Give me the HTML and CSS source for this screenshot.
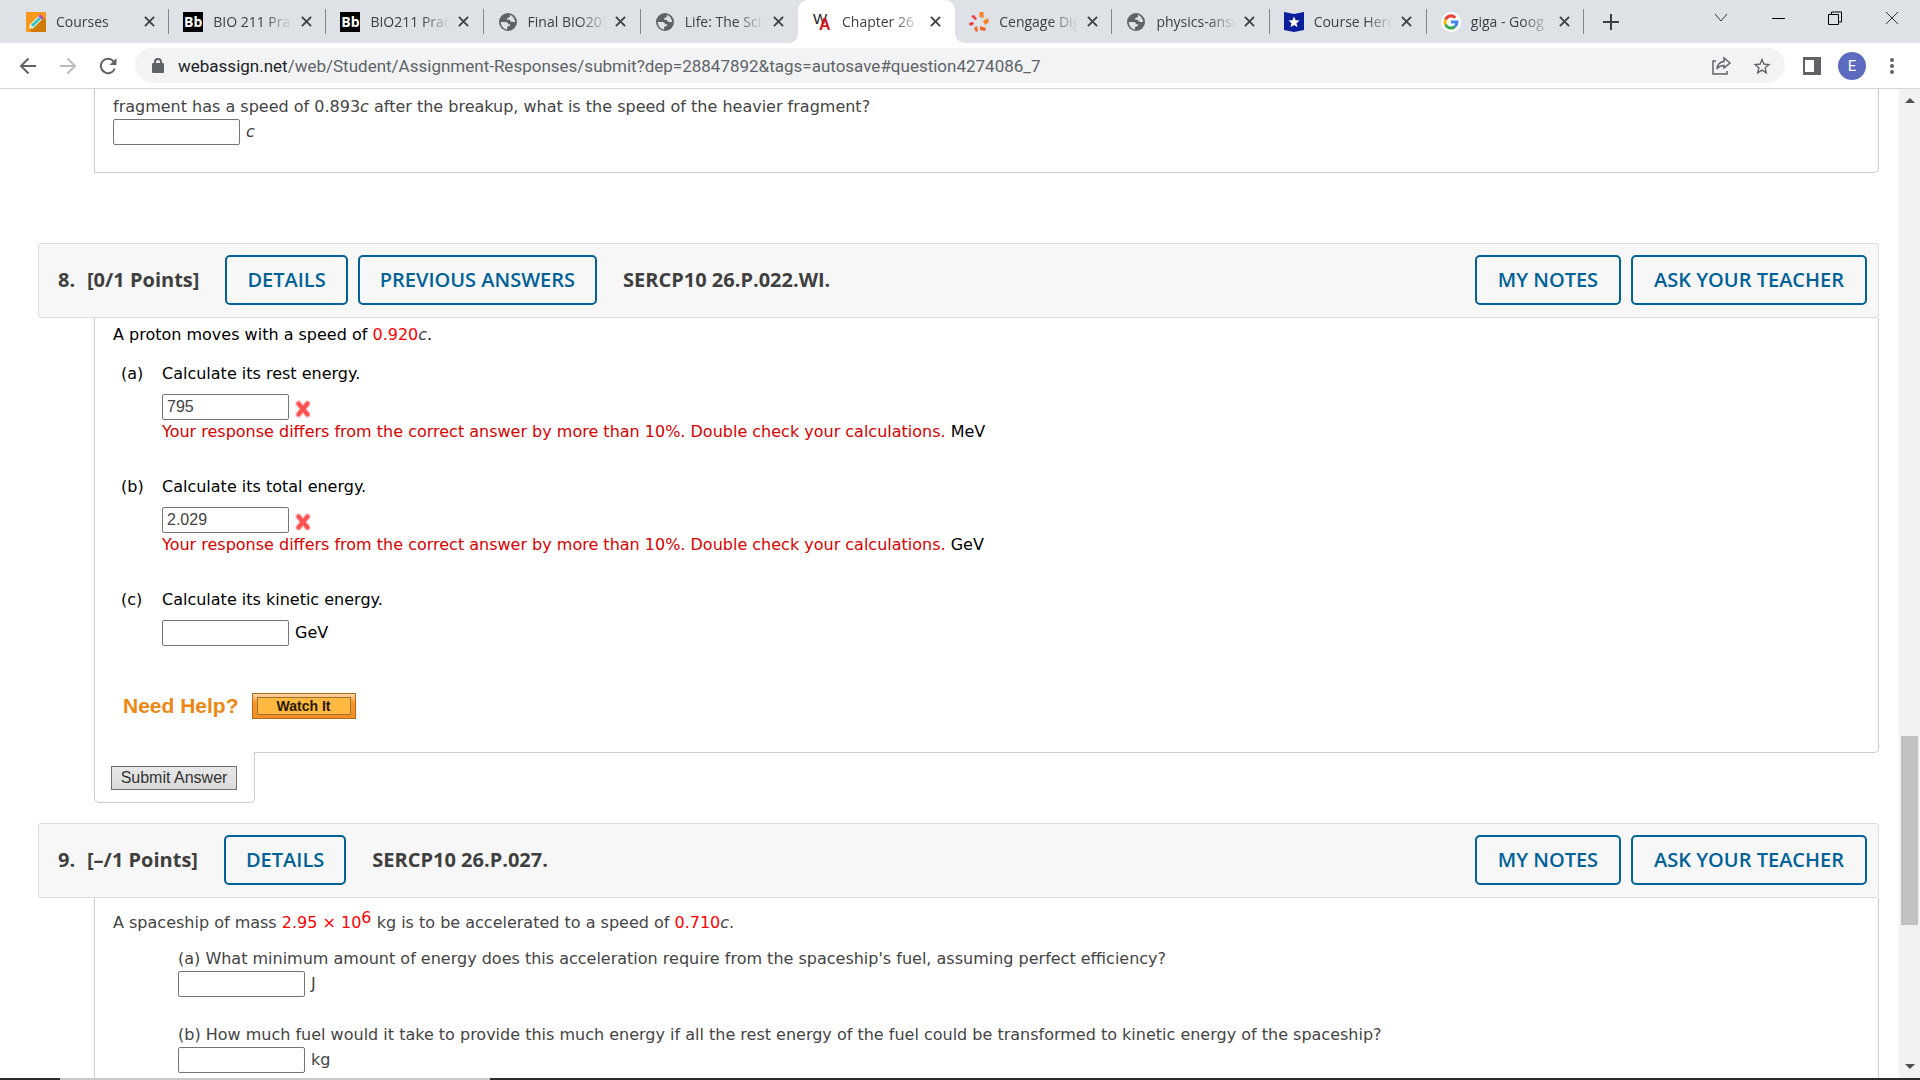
FILE: index.html
```
<!DOCTYPE html>
<html lang="en">
<head>
<meta charset="utf-8">
<title>Chapter 26</title>
<link rel="stylesheet" href="styles.css">
</head>
<body>
<svg class="defs" aria-hidden="true">
  <symbol id="globe" viewBox="2 2 20 20"><circle cx="12" cy="12" r="10" fill="#5f6368"/><path fill="#dee1e6" d="M4 12h5c2 0 3 1 3 2.500h2.500c0 2-1 2.500-3.500 2.700v3C7 20 4 16 4 12zM14 4c3 1 5.500 4 6 8h-3c-1.500 0-2.500-1-3-2.500h-3c0-2 .500-2.500 2-2.500 1 0 1.500-1 1-3z"/></symbol>
  <symbol id="cross" viewBox="0 0 12 12"><path d="M1 1l10 10M11 1L1 11" fill="none" stroke="#3c4043" stroke-width="2"/></symbol>
  <symbol id="wrong" viewBox="0 0 18 18"><path d="M4.500 3.500L13.500 14.500M13.500 3.500L4.500 14.500" fill="none" stroke="#fbb" stroke-width="6" stroke-linecap="round"/><path d="M4.500 3.500L13.500 14.500M13.500 3.500L4.500 14.500" fill="none" stroke="#fa5252" stroke-width="4" stroke-linecap="round"/></symbol>
</svg>
<div class="window">
  <header class="tabstrip">
    <div class="tabs" role="tablist">
      <div class="tab" role="tab">
        <svg class="favicon" viewBox="0 0 20 20"><path fill="#f9991c" d="M0 0h20v20H0z"/><path fill="#d07a06" d="M16 4l4 4v12H5l-1-4z"/><path stroke="#e8f7e8" stroke-width="5" d="M5 15L15 5"/><path stroke="#35c3c1" stroke-width="3" d="M6 14l8-8"/><path stroke="#b04cc0" stroke-width="5" d="M14 6l2-2"/><path fill="#fff3d0" d="M3 17l1-4 3 3z"/></svg>
        <span class="tab-title">Courses</span>
        <button class="tab-close" aria-label="Close tab"><svg><use href="#cross"/></svg></button><i class="tab-line"></i>
      </div>
      <div class="tab" role="tab">
        <span class="favicon bb">Bb</span>
        <span class="tab-title">BIO 211 Prac</span>
        <button class="tab-close" aria-label="Close tab"><svg><use href="#cross"/></svg></button><i class="tab-line"></i>
      </div>
      <div class="tab" role="tab">
        <span class="favicon bb">Bb</span>
        <span class="tab-title">BIO211 Pract</span>
        <button class="tab-close" aria-label="Close tab"><svg><use href="#cross"/></svg></button><i class="tab-line"></i>
      </div>
      <div class="tab" role="tab">
        <svg class="favicon globe"><use href="#globe"/></svg>
        <span class="tab-title">Final BIO201</span>
        <button class="tab-close" aria-label="Close tab"><svg><use href="#cross"/></svg></button><i class="tab-line"></i>
      </div>
      <div class="tab before-active" role="tab">
        <svg class="favicon globe"><use href="#globe"/></svg>
        <span class="tab-title">Life: The Scie</span>
        <button class="tab-close" aria-label="Close tab"><svg><use href="#cross"/></svg></button><i class="tab-line"></i>
      </div>
      <div class="tab active" role="tab" aria-selected="true">
        <svg class="favicon" viewBox="0 0 20 20"><text x="1" y="12" class="wa-w">W</text><text x="7" y="18" class="wa-a">A</text></svg>
        <span class="tab-title">Chapter 26</span>
        <button class="tab-close" aria-label="Close tab"><svg><use href="#cross"/></svg></button><i class="tab-line"></i>
      </div>
      <div class="tab" role="tab">
        <svg class="favicon" viewBox="0 0 20 20"><g fill="#f4652a"><path d="M10.500 0h4v6l-4-1z" fill="#fb8326"/><path d="M14 9l5-3 1 4-4 3z" fill="#fb8326"/><path d="M11 14l6 2-1 3-5-1z"/><path d="M5 16l3-2 1 5-2 1z"/><path d="M0 11l4-1 1 2-4 2z" fill="#e8343a"/><path d="M2 4l3-1 3 4-2 1z" fill="#ee3c3a"/></g></svg>
        <span class="tab-title">Cengage Dig</span>
        <button class="tab-close" aria-label="Close tab"><svg><use href="#cross"/></svg></button><i class="tab-line"></i>
      </div>
      <div class="tab" role="tab">
        <svg class="favicon globe"><use href="#globe"/></svg>
        <span class="tab-title">physics-answ</span>
        <button class="tab-close" aria-label="Close tab"><svg><use href="#cross"/></svg></button><i class="tab-line"></i>
      </div>
      <div class="tab" role="tab">
        <svg class="favicon" viewBox="0 0 20 20"><path fill="#0a1f9c" d="M0 0l10 2 10-2v18l-10 2-10-2z"/><path fill="#fff" d="M10 4.500l1.600 3.800 4 .300-3.100 2.600 1 4-3.500-2.200-3.500 2.200 1-4-3.100-2.600 4-.300z"/></svg>
        <span class="tab-title">Course Hero</span>
        <button class="tab-close" aria-label="Close tab"><svg><use href="#cross"/></svg></button><i class="tab-line"></i>
      </div>
      <div class="tab" role="tab">
        <svg class="favicon" viewBox="0 0 20 20"><circle cx="10" cy="10" r="10" fill="#fff"/><g fill="none" stroke-width="3"><path stroke="#ea4335" d="M4.500 7.500A6 6 0 0 1 14.300 5.700"/><path stroke="#fbbc05" d="M4.500 7.500A6 6 0 0 0 4.500 12.500"/><path stroke="#34a853" d="M4.500 12.500A6 6 0 0 0 13.900 14.600"/><path stroke="#4285f4" d="M10 10h6A6 6 0 0 1 13.900 14.600"/></g></svg>
        <span class="tab-title">giga - Goog</span>
        <button class="tab-close" aria-label="Close tab"><svg><use href="#cross"/></svg></button><i class="tab-line"></i>
      </div>
    </div>
    <button class="new-tab" aria-label="New tab"><svg viewBox="0 0 16 16" width="16" height="16"><path d="M8 0v16M0 8h16" stroke="#3c4043" stroke-width="2"/></svg></button>
    <div class="window-controls">
      <button aria-label="Search tabs"><svg viewBox="0 0 14 14" width="14" height="14"><path d="M1 3l6 7 6-7" fill="none" stroke="#333"/></svg></button>
      <button aria-label="Minimize"><svg viewBox="0 0 14 14" width="14" height="14"><path d="M1 7.500h13" stroke="#000"/></svg></button>
      <button aria-label="Restore"><svg viewBox="0 0 14 14" width="14" height="14"><path d="M.5 3.500h10v10H.5zM3.500 3V1h10v10h-2.500" fill="none" stroke="#000"/></svg></button>
      <button aria-label="Close"><svg viewBox="0 0 14 14" width="14" height="14"><path d="M1 1l12 12M13 1L1 13" stroke="#333"/></svg></button>
    </div>
  </header>

  <nav class="toolbar">
    <button class="tool" aria-label="Back"><svg viewBox="0 0 18 18" width="18" height="18"><path d="M17 9H2M9.500 1.500L2 9l7.500 7.500" fill="none" stroke="#5f6368" stroke-width="2"/></svg></button>
    <button class="tool" aria-label="Forward"><svg viewBox="0 0 18 18" width="18" height="18"><path d="M1 9h15M8.500 1.500L16 9l-7.500 7.500" fill="none" stroke="#babcbe" stroke-width="2"/></svg></button>
    <button class="tool" aria-label="Reload"><svg viewBox="0 0 18 18" width="18" height="18"><path d="M15.800 11.500A7.200 7.200 0 1 1 14.500 4.300" fill="none" stroke="#5f6368" stroke-width="2"/><path d="M17.500 1v7h-7z" fill="#5f6368"/></svg></button>
    <div class="omnibox">
      <svg class="lock" viewBox="0 0 12 15" width="12" height="15"><path d="M3 6V4a3 3 0 0 1 6 0v2" fill="none" stroke="#5f6368" stroke-width="2"/><rect y="5" width="12" height="10" rx="1" fill="#5f6368"/></svg>
      <div class="url"><span class="host">webassign.net</span>/web/Student/Assignment-Responses/submit?dep=28847892&amp;tags=autosave#question4274086_7</div>
      <button class="tool" aria-label="Share"><svg viewBox="0 0 20 20" width="20" height="20"><path d="M4 5H1v13h14v-3" fill="none" stroke="#5f6368" stroke-width="1.500"/><path d="M12 2l6 5-6 5V9.500c-3.500 0-5.500 1-7 3.500.3-4 2.500-7 7-7.500z" fill="none" stroke="#5f6368" stroke-width="1.500"/></svg></button>
      <button class="tool" aria-label="Bookmark"><svg viewBox="2 1 20 21" width="18" height="18"><path fill="#5f6368" d="M22 9.240l-7.190-.62L12 2 9.190 8.630 2 9.240l5.460 4.730L5.820 21 12 17.270 18.180 21l-1.630-7.030L22 9.240zM12 15.400l-3.760 2.270 1-4.280-3.320-2.880 4.380-.38L12 6.100l1.710 4.040 4.380.38-3.320 2.880 1 4.280L12 15.400z"/></svg></button>
    </div>
    <button class="tool" aria-label="Side panel"><svg viewBox="0 0 18 18" width="18" height="18"><path d="M0 0h18v18H0zM2 3v12h9V3z" fill="#5f6368" fill-rule="evenodd"/></svg></button>
    <button class="tool" aria-label="Profile"><span class="avatar">E</span></button>
    <button class="tool" aria-label="Menu"><svg viewBox="0 0 4 16" width="4" height="16" fill="#5f6368"><circle cx="2" cy="2" r="2"/><circle cx="2" cy="8" r="2"/><circle cx="2" cy="14" r="2"/></svg></button>
  </nav>

  <div class="viewport">
    <main class="page">
      <section class="question">
        <div class="content first">
          <label for="q7">fragment has a speed of 0.893<em>c</em> after the breakup, what is the speed of the heavier fragment?</label>
          <div class="answer"><input class="box" id="q7" type="text"><em>c</em></div>
        </div>
      </section>

      <section class="question eight">
        <div class="bar">
          <h2><span class="number">8.</span>[0/1 Points]</h2>
          <div class="actions"><button class="outline">DETAILS</button><button class="outline">PREVIOUS ANSWERS</button></div>
          <h2>SERCP10 26.P.022.WI.</h2>
          <div class="actions end"><button class="outline">MY NOTES</button><button class="outline">ASK YOUR TEACHER</button></div>
        </div>
        <div class="content solved">
          <p>A proton moves with a speed of <span class="value">0.920</span><em class="dim">c</em>.</p>
          <div class="parts">
            <span>(a)</span>
            <div>
              <label for="q8a">Calculate its rest energy.</label>
              <div class="answer"><input class="box" id="q8a" type="text" value="795"><svg class="mark"><use href="#wrong"/></svg></div>
              <p><span class="error">Your response differs from the correct answer by more than 10%. Double check your calculations.</span> MeV</p>
            </div>
            <span>(b)</span>
            <div>
              <label for="q8b">Calculate its total energy.</label>
              <div class="answer"><input class="box" id="q8b" type="text" value="2.029"><svg class="mark"><use href="#wrong"/></svg></div>
              <p><span class="error">Your response differs from the correct answer by more than 10%. Double check your calculations.</span> GeV</p>
            </div>
            <span>(c)</span>
            <div>
              <label for="q8c">Calculate its kinetic energy.</label>
              <div class="answer"><input class="box" id="q8c" type="text">GeV</div>
            </div>
          </div>
          <div class="help"><strong>Need Help?</strong><button class="watch"><span>Watch It</span></button></div>
        </div>
        <div class="submit"><button>Submit Answer</button></div>
      </section>

      <section class="question nine">
        <div class="bar">
          <h2><span class="number">9.</span>[–/1 Points]</h2>
          <div class="actions"><button class="outline">DETAILS</button></div>
          <h2>SERCP10 26.P.027.</h2>
          <div class="actions end"><button class="outline">MY NOTES</button><button class="outline">ASK YOUR TEACHER</button></div>
        </div>
        <div class="content open">
          <p>A spaceship of mass <span class="value">2.95 × 10<sup>6</sup></span> kg is to be accelerated to a speed of <span class="value">0.710</span><em>c</em>.</p>
          <div class="indented">
            <div>
              <label for="q9a">(a) What minimum amount of energy does this acceleration require from the spaceship's fuel, assuming perfect efficiency?</label>
              <div class="answer"><input class="box" id="q9a" type="text">J</div>
            </div>
            <div>
              <label for="q9b">(b) How much fuel would it take to provide this much energy if all the rest energy of the fuel could be transformed to kinetic energy of the spaceship?</label>
              <div class="answer"><input class="box" id="q9b" type="text">kg</div>
            </div>
          </div>
        </div>
      </section>
    </main>
    <div class="scrollbar">
      <svg viewBox="0 0 10 5" width="10" height="5"><path d="M0 5l5-5 5 5z" fill="#505050"/></svg>
      <div class="track"><div class="thumb"></div></div>
      <svg viewBox="0 0 10 5" width="10" height="5"><path d="M0 0l5 5 5-5z" fill="#505050"/></svg>
    </div>
  </div>
  <div class="taskbar"><div class="search"></div></div>
</div>
</body>
</html>
```
FILE: styles.css
```
* { box-sizing: border-box; }
body { margin: 0; background: #fff; }
button { margin: 0; padding: 0; border: 0; background: none; font: inherit; color: inherit; }
h2, p { margin: 0; }
svg { display: block; flex: none; }
.defs { position: absolute; width: 0; height: 0; }

.window { display: flex; flex-direction: column; height: 100vh; overflow: hidden; }

/* Tab strip */
.tabstrip {
  display: flex; flex: none; height: 43px; padding-left: 12px;
  background: #dee1e6; color: #3c4043;
  font: 14px/20px "Open Sans", sans-serif;
}
.tabs { display: flex; flex: 0 1 1572px; min-width: 0; }
.tab { position: relative; display: flex; align-items: center; flex: 1 1 0; min-width: 0; padding-left: 14px; }
.favicon { flex: none; width: 20px; height: 20px; }
.favicon.globe { padding: 1px; }
.bb { background: #000; color: #fff; font-weight: 700; text-align: center; }
.wa-w { font: 15px "Liberation Sans", sans-serif; fill: #222; }
.wa-a { font: 700 16px "Liberation Sans", sans-serif; fill: #d8141c; }
.tab-title {
  flex: 1; min-width: 0; margin: 0 4px 0 10px; overflow: hidden; white-space: nowrap;
  mask-image: linear-gradient(to left, transparent, #000 28px);
}
.tab-close { display: grid; place-items: center; width: 20px; height: 20px; margin-right: 9px; }
.tab-close svg { width: 11px; height: 11px; }
.tab-line { width: 1px; height: 25px; background: #80868b; }
.before-active .tab-line, .active .tab-line { background: none; }
.active { background: #fff; border-radius: 10px 10px 0 0; }
.active::before, .active::after { content: ""; position: absolute; bottom: 0; width: 10px; height: 10px; }
.active::before { right: 100%; background: radial-gradient(circle at 0 0, transparent 10px, #fff 10px); }
.active::after { left: 100%; background: radial-gradient(circle at 100% 0, transparent 10px, #fff 10px); }
.new-tab { display: grid; place-items: center; width: 54px; }
.window-controls { display: flex; margin-left: auto; height: 36px; }
.window-controls button { display: grid; place-items: center; width: 57px; }

/* Toolbar */
.toolbar {
  display: flex; align-items: center; flex: none; height: 46px; padding: 0 8px;
  border-bottom: 1px solid #d8d8d8; background: #fff;
}
.tool { display: grid; place-items: center; flex: none; width: 40px; height: 35px; }
.omnibox {
  display: flex; align-items: center; flex: 1; min-width: 0; height: 35px; margin: 0 7px; padding: 0 3px 0 17px;
  border-radius: 18px; background: #f1f3f4;
}
.url {
  flex: 1; min-width: 0; margin-left: 14px; overflow: hidden; white-space: nowrap;
  color: #5f6368; font: 17px/24px Roboto, sans-serif;
}
.host { color: #202124; }
.avatar {
  width: 28px; height: 28px; border-radius: 50%; background: #5c6bc0; color: #fff;
  font: 15px/28px Roboto, sans-serif; text-align: center;
}

/* Page */
.viewport { display: flex; flex: 1; min-height: 0; }
.page {
  flex: 1; min-width: 0; padding: 0 20px 0 38px; overflow: hidden;
  color: #444; font: 16px/24px "DejaVu Sans", sans-serif;
}
.bar {
  display: flex; align-items: center; gap: 26px; min-height: 75px; padding: 0 11px 2px 19px;
  border: 1px solid #ddd; border-radius: 3px; background: #f7f7f7;
  font: 20px/26px "Open Sans", sans-serif;
}
.bar h2 { color: #3f3f3f; font: inherit; font-weight: 700; white-space: nowrap; }
.number { display: inline-block; width: 29px; }
.actions { display: flex; gap: 10px; }
.end { margin-left: auto; }
.outline {
  height: 50px; padding: 0 20px; border: 2px solid #006298; border-radius: 5px;
  color: #006298; font-weight: 600; white-space: nowrap;
}
.end .outline { padding: 0 21px; }
.content {
  margin-left: 56px; padding-left: 18px;
  border: 1px solid #ccc; border-top: 0; border-radius: 0 0 5px 5px;
}
.content label { display: block; }
.first { padding-top: 6px; padding-bottom: 27px; border-radius: 0 0 5px 0; }
.answer { display: flex; align-items: center; gap: 6px; height: 26px; }
.box {
  width: 127px; height: 26px; padding: 0 4px; border: 1px solid #767676; border-radius: 2px;
  background: #fff; color: #444; font: 16px "Liberation Sans", sans-serif;
}
.mark { width: 18px; height: 18px; margin: 4px 0 0 -1px; }
.value { color: #f00; }
.error { color: #d90000; }

.eight { margin-top: 70px; }
.solved { padding-top: 5px; padding-bottom: 33px; border-bottom-left-radius: 0; color: #000; }
.dim { color: #444; }
.parts { display: grid; grid-template-columns: 41px 1fr; row-gap: 31px; margin: 15px 0 0 8px; }
.parts .answer { margin-top: 8px; }
.help { display: flex; align-items: center; gap: 13px; margin: 47px 0 0 10px; }
.help strong { color: #ee8712; font: 700 21px/26px "Liberation Sans", sans-serif; }
.watch {
  width: 104px; height: 26px; padding: 3px 4px; border: 1px solid #b06a1e;
  background: linear-gradient(#fcd9b0, #f7962f 35%, #f58f25);
}
.watch span {
  display: block; border: 1px solid #a5722a; background: #fdb940; color: #2a1a00;
  font: 700 14px/16px "Liberation Sans", sans-serif;
}
.submit {
  position: relative; width: 161px; margin: -1px 0 0 56px; padding: 14px 0 12px 16px;
  border: 1px solid #ccc; border-top: 0; border-radius: 0 0 5px 5px; background: #fff;
}
.submit button {
  display: block; width: 126px; height: 24px; border: 1px solid #707070;
  background: linear-gradient(#e8e8e8, #dadada); color: #333; font: 16px/20px "Liberation Sans", sans-serif;
}

.nine { margin-top: 20px; }
.open { padding-top: 13px; padding-bottom: 27px; }
.open sup { font-size: 16px; line-height: 0; vertical-align: 5px; }
.indented { display: grid; gap: 26px; margin: 12px 0 0 65px; }

/* Scrollbar */
.scrollbar {
  display: flex; flex-direction: column; align-items: center; flex: none; width: 21px; padding: 9px 0;
  background: #f1f1f1;
}
.track { flex: 1; width: 17px; padding-top: 633px; }
.thumb { height: 189px; background: #c1c1c1; }

.taskbar { flex: none; height: 2px; padding-left: 60px; background: #2b2b2e; }
.search { width: 430px; height: 2px; background: #c9c9c9; }
```
